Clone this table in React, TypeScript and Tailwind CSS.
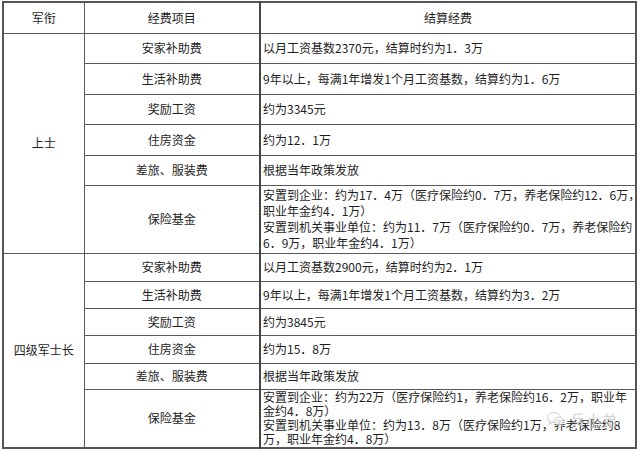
import React from "react";

const cellB = "border border-[#5a5a5a]";
const midB = "border border-[#5a5a5a] border-r-2 border-r-[#444]";

type Row = { item: string; h: string; lines: string[]; lh?: string };

const s1: Row[] = [
  { item: "安家补助费", h: "h-[30px]", lines: ["以月工资基数2370元，结算时约为1．3万"] },
  { item: "生活补助费", h: "h-[31px]", lines: ["9年以上，每满1年增发1个月工资基数，结算约为1．6万"] },
  { item: "奖励工资", h: "h-[30px]", lines: ["约为3345元"] },
  { item: "住房资金", h: "h-[31px]", lines: ["约为12．1万"] },
  { item: "差旅、服装费", h: "h-[30px]", lines: ["根据当年政策发放"] },
  {
    item: "保险基金",
    h: "h-[68px]",
    lh: "leading-[16px]",
    lines: [
      "安置到企业：约为17．4万（医疗保险约0．7万，养老保险约12．6万，",
      "职业年金约4．1万）",
      "安置到机关事业单位：约为11．7万（医疗保险约0．7万，养老保险约",
      "6．9万，职业年金约4．1万）",
    ],
  },
];

const s2: Row[] = [
  { item: "安家补助费", h: "h-[28px]", lines: ["以月工资基数2900元，结算时约为2．1万"] },
  { item: "生活补助费", h: "h-[27px]", lines: ["9年以上，每满1年增发1个月工资基数，结算约为3．2万"] },
  { item: "奖励工资", h: "h-[27px]", lines: ["约为3845元"] },
  { item: "住房资金", h: "h-[28px]", lines: ["约为15．8万"] },
  { item: "差旅、服装费", h: "h-[26px]", lines: ["根据当年政策发放"] },
  {
    item: "保险基金",
    h: "h-[59px]",
    lh: "leading-[14px]",
    lines: [
      "安置到企业：约为22万（医疗保险约1，养老保险约16．2万，职业年",
      "金约4．8万）",
      "安置到机关事业单位：约为13．8万（医疗保险约1万，养老保险约8",
      "万，职业年金约4．8万）",
    ],
  },
];

function Section({ rank, rows }: { rank: string; rows: Row[] }) {
  return (
    <>
      {rows.map((r, i) => (
        <tr key={i} className={r.h}>
          {i === 0 && (
            <td rowSpan={rows.length} className={`${cellB} text-center align-middle`}>
              {rank}
            </td>
          )}
          <td className={`${midB} text-center align-middle`}>{r.item}</td>
          <td className={`${cellB} pl-[2px] align-middle`}>
            <div className={r.lh ?? ""}>
              {r.lines.map((l, j) => (
                <div key={j} className="whitespace-nowrap">
                  {l}
                </div>
              ))}
            </div>
          </td>
        </tr>
      ))}
    </>
  );
}

export default function App() {
  return (
    <div className="relative w-[640px] h-[450px] bg-white overflow-hidden text-[12px] text-[#1e1e1e] font-['Noto_Sans_CJK_SC','Noto_Sans',sans-serif]">
      <div className="pl-[2px] pt-[1px]">
        <table className="border-collapse table-fixed w-[633px] border-2 border-[#555]">
          <colgroup>
            <col className="w-[81px]" />
            <col className="w-[176px]" />
            <col className="w-[376px]" />
          </colgroup>
          <tbody>
            <tr className="h-[31px]">
              <td className={`${cellB} text-center align-middle`}>军衔</td>
              <td className={`${midB} text-center align-middle`}>经费项目</td>
              <td className={`${cellB} text-center align-middle`}>结算经费</td>
            </tr>
            <Section rank="上士" rows={s1} />
            <Section rank="四级军士长" rows={s2} />
          </tbody>
        </table>
      </div>
      <div className="absolute left-[546px] top-[411px] flex items-center gap-[4px] text-[#c8c8c8] opacity-80">
        <svg width="20" height="16" viewBox="0 0 20 16" fill="none" stroke="#c4c4c4" strokeWidth="1">
          <ellipse cx="8" cy="6.5" rx="6.5" ry="5" />
          <path d="M4 10.5 L3 13.5 L6.5 11.3" />
          <ellipse cx="13" cy="10" rx="5" ry="4" fill="white" />
          <path d="M16 13.3 L17 15 L14.5 13.8" />
        </svg>
        <span className="text-[15px] leading-none tracking-[1px]">兵小弟</span>
      </div>
    </div>
  );
}
